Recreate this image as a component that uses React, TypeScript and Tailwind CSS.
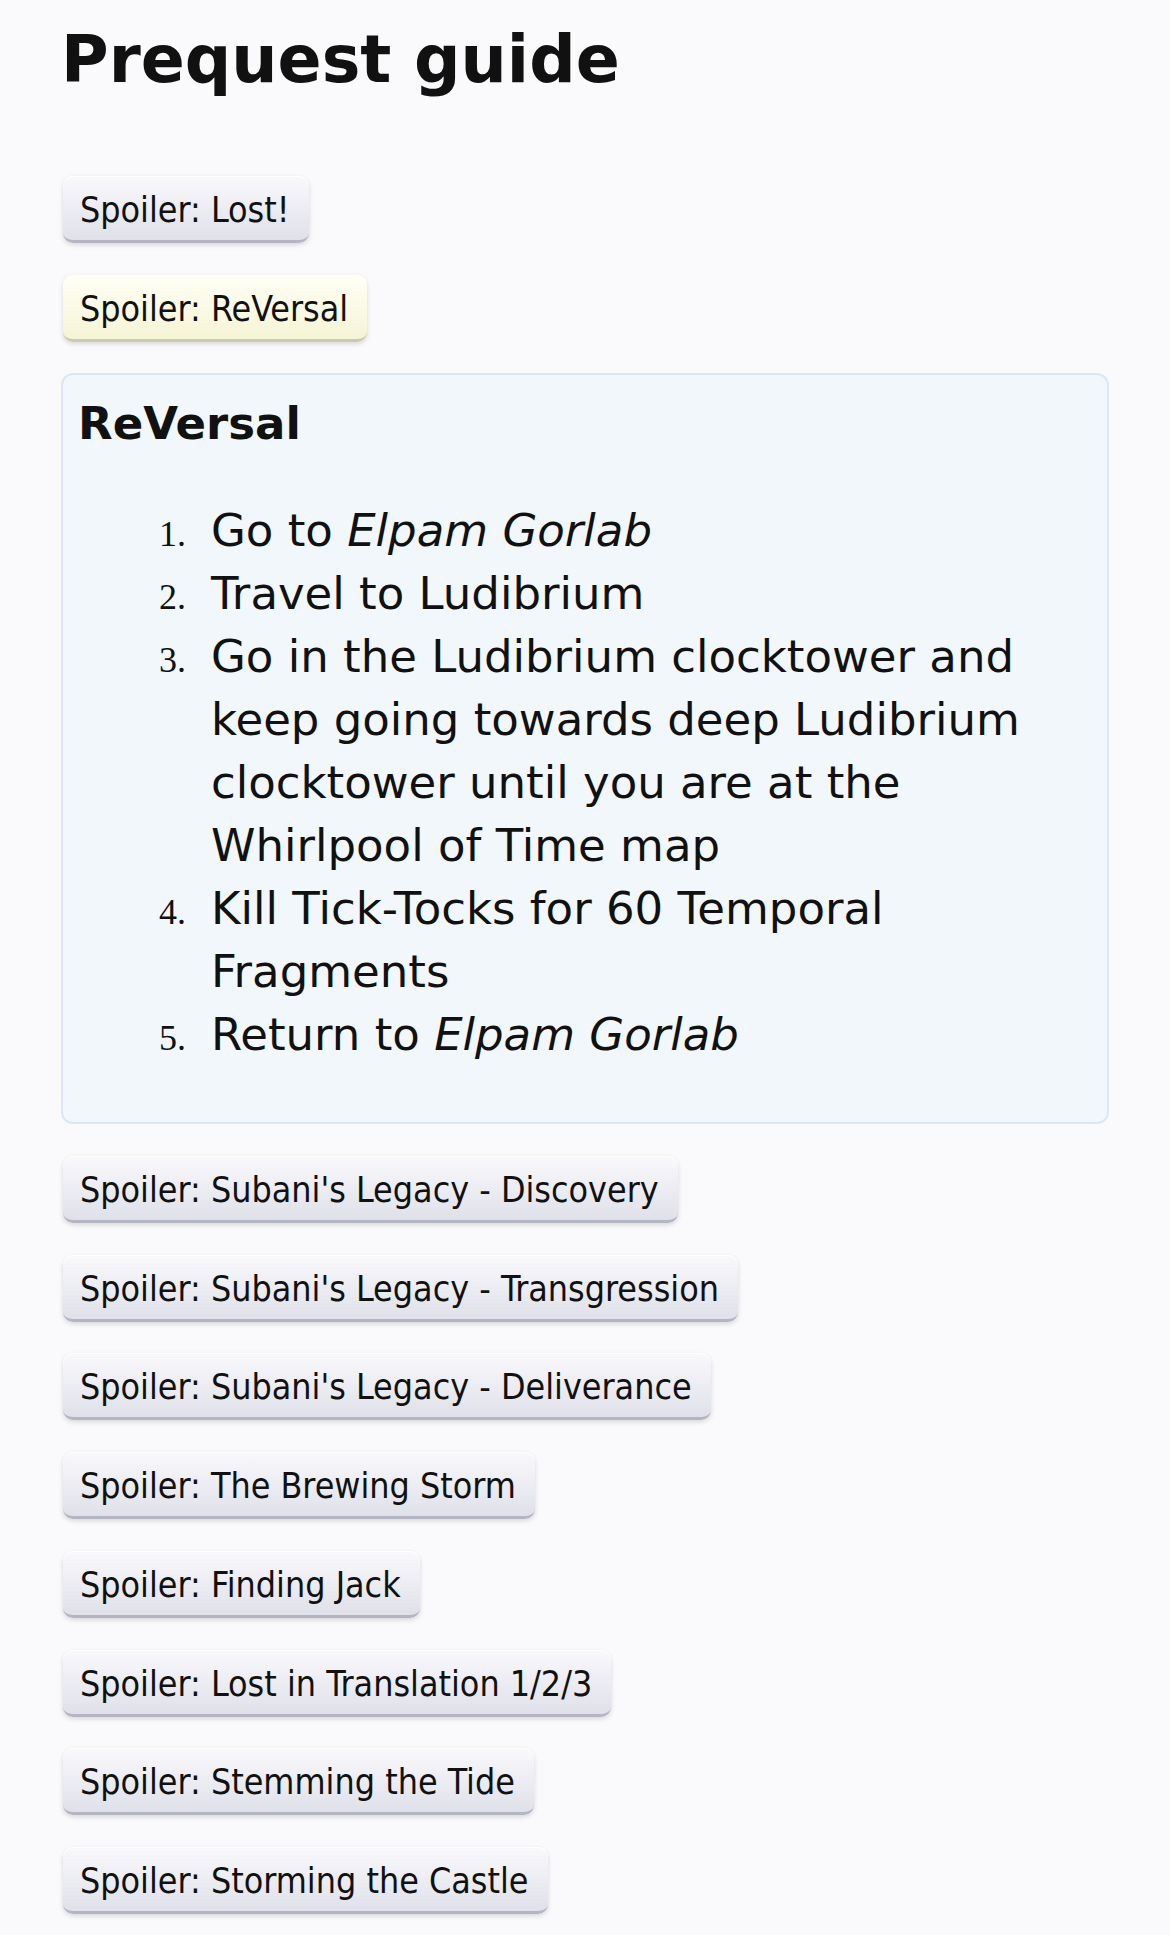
import React from "react";

const buttons1 = ["Spoiler: Lost!"];
const buttonsAfter = [
  "Spoiler: Subani's Legacy - Discovery",
  "Spoiler: Subani's Legacy - Transgression",
  "Spoiler: Subani's Legacy - Deliverance",
  "Spoiler: The Brewing Storm",
  "Spoiler: Finding Jack",
  "Spoiler: Lost in Translation 1/2/3",
  "Spoiler: Stemming the Tide",
  "Spoiler: Storming the Castle",
];

function SpoilerButton({ label, active }: { label: string; active?: boolean }) {
  return (
    <div
      className={
        active
          ? "ml-[2px] h-[67px] rounded-[10px] border-b-[3px] border-[#cbc9ae] bg-gradient-to-b from-[#fffff6] to-[#f6f4d6] pl-[17px] pr-[19px] pt-[11px] pb-[8px] font-['DejaVu_Sans_Condensed','DejaVu_Sans',sans-serif] text-[35.5px] leading-[45px] whitespace-nowrap shadow-[0_2px_5px_rgba(0,0,0,0.14),inset_0_1px_0_#ffffff]"
          : "ml-[2px] h-[67px] rounded-[10px] border-b-[3px] border-[#b4b4c2] bg-gradient-to-b from-[#f9f9fc] to-[#e0e0ea] pl-[17px] pr-[19px] pt-[11px] pb-[8px] font-['DejaVu_Sans_Condensed','DejaVu_Sans',sans-serif] text-[35.5px] leading-[45px] whitespace-nowrap shadow-[0_2px_5px_rgba(0,0,0,0.14),inset_0_1px_0_#ffffff]"
      }
    >
      {label}
    </div>
  );
}

function Step({ n, children }: { n: number; children: React.ReactNode }) {
  return (
    <li className="flex items-baseline">
      <span className="w-[108px] shrink-0 text-right font-['Liberation_Serif',serif] text-[36px] leading-none">
        {n}.
      </span>
      <span className="ml-[25px]">{children}</span>
    </li>
  );
}

export default function App() {
  return (
    <div className="min-h-screen bg-[#fafafc] px-[61px] pt-[19px] pb-[20px] font-['DejaVu_Sans',sans-serif] text-[#111111]">
      <h1 className="text-[65px] font-bold leading-[82px]">Prequest guide</h1>
      <div className="mt-[75px] flex flex-col items-start gap-[31.7px]">
        {buttons1.map((b) => (
          <SpoilerButton key={b} label={b} />
        ))}
        <SpoilerButton label="Spoiler: ReVersal" active />
        <div className="w-full rounded-[12px] border-2 border-[#dae8f5] bg-[#f2f7fb] px-[15px] pt-[22px] pb-[56px]">
          <h3 className="text-[45px] font-bold leading-[53px]">ReVersal</h3>
          <ol className="mt-[49px] text-[45px] leading-[63px]">
            <Step n={1}>
              Go to <em>Elpam Gorlab</em>
            </Step>
            <Step n={2}>Travel to Ludibrium</Step>
            <Step n={3}>
              Go in the Ludibrium clocktower and keep going towards deep Ludibrium clocktower until you are at the
              Whirlpool of Time map
            </Step>
            <Step n={4}>Kill Tick-Tocks for 60 Temporal Fragments</Step>
            <Step n={5}>
              Return to <em>Elpam Gorlab</em>
            </Step>
          </ol>
        </div>
        {buttonsAfter.map((b) => (
          <SpoilerButton key={b} label={b} />
        ))}
      </div>
    </div>
  );
}
